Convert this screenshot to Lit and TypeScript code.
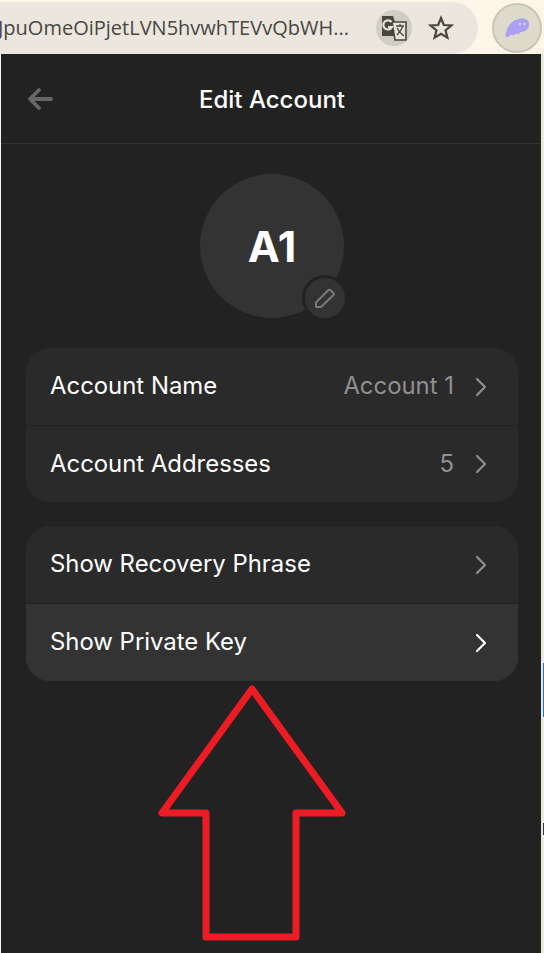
import { LitElement, html, css, svg } from 'lit';
import { customElement } from 'lit/decorators.js';

const chevron = svg`<path d="M2 2 L10 10 L2 18" fill="none" stroke="currentColor" stroke-width="2.2" stroke-linecap="round" stroke-linejoin="round" />`;

interface Row {
  label: string;
  value?: string;
  hover?: boolean;
}

const groups: Row[][] = [
  [
    { label: 'Account Name', value: 'Account 1' },
    { label: 'Account Addresses', value: '5' },
  ],
  [
    { label: 'Show Recovery Phrase' },
    { label: 'Show Private Key', hover: true },
  ],
];

@customElement('app-root')
export class AppRoot extends LitElement {
  static styles = css`
    :host {
      display: block;
      position: relative;
      width: 544px;
      height: 953px;
      overflow: hidden;
      background: #fdf6e8;
      font-family: Inter, 'Liberation Sans', sans-serif;
    }

    .chrome {
      display: flex;
      align-items: center;
      height: 54px;
    }

    .url {
      display: flex;
      align-items: center;
      box-sizing: border-box;
      width: 478px;
      height: 52px;
      margin-top: 1px;
      padding-right: 24px;
      background: #ebe7df;
      border-radius: 0 26px 26px 0;
      overflow: hidden;
    }

    .url__text {
      flex: 1;
      margin-left: -2px;
      font-family: 'Open Sans', sans-serif;
      font-size: 20px;
      color: #4a4640;
      white-space: nowrap;
    }

    .url__translate {
      display: flex;
      align-items: center;
      justify-content: center;
      flex: none;
      width: 36px;
      height: 36px;
      margin-right: 16px;
      border-radius: 50%;
      background: #d0cdc5;
    }

    .url__star {
      display: block;
      flex: none;
      width: 26px;
      height: 26px;
    }

    .ext {
      display: flex;
      align-items: center;
      justify-content: center;
      flex: none;
      box-sizing: border-box;
      width: 50px;
      height: 50px;
      margin-left: 14px;
      margin-top: 1px;
      border-radius: 50%;
      background: #dedbcd;
      border: 2px solid #c8c5b6;
    }

    .panel {
      box-sizing: border-box;
      width: 540px;
      height: 899px;
      margin-left: 1px;
      background: #222222;
      color: #ffffff;
    }

    .header {
      display: flex;
      align-items: center;
      justify-content: center;
      position: relative;
      height: 90px;
      border-bottom: 1px solid #333333;
      box-sizing: border-box;
    }

    .header__back {
      position: absolute;
      left: 26px;
      top: 33px;
      width: 26px;
      height: 24px;
    }

    .header__title {
      font-size: 24px;
      font-weight: 500;
      margin: 1px 0 0 2px;
    }

    .avatar {
      position: relative;
      display: flex;
      align-items: center;
      justify-content: center;
      width: 144px;
      height: 144px;
      margin: 30px 0 30px 199px;
      border-radius: 50%;
      background: #333333;
      font-size: 43px;
      font-weight: 700;
    }

    .avatar__edit {
      position: absolute;
      right: -4px;
      bottom: -3px;
      display: flex;
      align-items: center;
      justify-content: center;
      box-sizing: border-box;
      width: 46px;
      height: 46px;
      border-radius: 50%;
      background: #333333;
      border: 3px solid #222222;
    }

    .groups {
      display: flex;
      flex-direction: column;
      gap: 24px;
      width: 492px;
      margin-left: 25px;
    }

    .group {
      border-radius: 24px;
      overflow: hidden;
      background: #2a2a2a;
    }

    .row {
      display: flex;
      align-items: center;
      box-sizing: border-box;
      height: 77px;
      padding: 0 31px 0 24px;
      font-size: 23.9px;
      color: #ffffff;
    }

    .row + .row {
      border-top: 1px solid #222222;
    }

    .row__label {
      flex: 1;
      margin-bottom: 2px;
    }

    .row__value {
      margin: 0 21px 2px 0;
      color: #8f8f8f;
    }

    .row__chevron {
      display: block;
      width: 12px;
      height: 20px;
      color: #8f8f8f;
    }

    .row--hover {
      height: 78px;
      background: #333333;
    }

    .row--hover .row__chevron {
      color: #ffffff;
    }

    .annotation {
      position: absolute;
      left: 0;
      top: 0;
      width: 544px;
      height: 953px;
      pointer-events: none;
    }

    .desktop-edge {
      position: absolute;
      top: 54px;
      right: 0;
      bottom: 0;
      width: 3px;
      background: #ebe8e0;
    }

    .desktop-edge__blue {
      position: absolute;
      top: 609px;
      right: 0;
      width: 1px;
      height: 54px;
      background: #2f6fc0;
    }

    .desktop-edge__dark {
      position: absolute;
      top: 769px;
      right: 0;
      width: 1px;
      height: 12px;
      background: #3a3a3a;
    }
  `;

  render() {
    return html`
      ${this.chromeBar}
      <div class="panel">
        <div class="header">
          <svg class="header__back" viewBox="0 0 26 24">
            <path
              d="M3 12 H24 M12 3 L3 12 L12 21"
              fill="none"
              stroke="#666666"
              stroke-width="3.8"
              stroke-linejoin="round"
              stroke-linecap="round"
            />
          </svg>
          <div class="header__title">Edit Account</div>
        </div>
        <div class="avatar">
          A1
          <div class="avatar__edit">
            <svg width="22" height="22" viewBox="0 0 22 22">
              <path
                d="M2 15.5 L14.5 3 a1.2 1.2 0 0 1 1.7 0 L19.5 6.3 a1.2 1.2 0 0 1 0 1.7 L7 20 H2 Z"
                fill="none"
                stroke="#7a7a7a"
                stroke-width="2"
                stroke-linejoin="round"
              />
            </svg>
          </div>
        </div>
        <div class="groups">
          ${groups.map(
            group => html`<div class="group">
              ${group.map(row => this.renderRow(row))}
            </div>`
          )}
        </div>
      </div>
      <div class="desktop-edge">
        <div class="desktop-edge__blue"></div>
        <div class="desktop-edge__dark"></div>
      </div>
      <svg class="annotation" viewBox="0 0 544 953">
        <path
          d="M252 689 L162 813 H206 V937 H296 V813 H342 Z"
          fill="none"
          stroke="#ed1c24"
          stroke-width="7"
          stroke-linejoin="round"
        />
      </svg>
    `;
  }

  private get chromeBar() {
    return html`<div class="chrome">
      <div class="url">
        <span class="url__text">JpuOmeOiPjetLVN5hvwhTEVvQbWH...</span>
        <div class="url__translate">
          <svg width="30" height="30" viewBox="0 0 30 30">
            <path d="M3 3 H14 L21 23 H3 Z" fill="#4a4640" />
            <path
              d="M13 9 H27 V27 H16 Z"
              fill="#e6e3db"
              stroke="#4a4640"
              stroke-width="1.6"
            />
            <path
              d="M17 13 H25 M21 11 V13 M24 13 C22 18 20 20 18 22 M18 15 C20 19 22 21 25 23"
              fill="none"
              stroke="#4a4640"
              stroke-width="1.3"
            />
            <path
              d="M12.5 9 A4.6 4.6 0 1 0 13 14 H9"
              fill="none"
              stroke="#e6e3db"
              stroke-width="2.2"
            />
          </svg>
        </div>
        <svg class="url__star" viewBox="0 0 26 26">
          <path
            d="M13 3 L15.8 10 L23.3 10.5 L17.5 15.4 L19.4 22.7 L13 18.7 L6.6 22.7 L8.5 15.4 L2.7 10.5 L10.2 10 Z"
            fill="none"
            stroke="#4a4640"
            stroke-width="2.2"
            stroke-linejoin="miter"
          />
        </svg>
      </div>
      <div class="ext">
        <svg width="25" height="20" viewBox="0 0 25 20">
          <path
            d="M0.5 17 C2 8 8 0.5 17 0.5 C22 0.5 24.5 3.5 24 7.5 C23.5 11.5 20 14 15.5 14 C14.5 16.5 12 16 11 15.5 C9.5 18 7 17.5 6 16.5 C4 19.5 0.5 20 0.5 17 Z"
            fill="#ab9ff2"
          />
          <circle cx="15" cy="6" r="1.2" fill="#dedbcd" />
          <circle cx="19.5" cy="6" r="1.2" fill="#dedbcd" />
        </svg>
      </div>
    </div>`;
  }

  private renderRow(row: Row) {
    return html`<div class="row ${row.hover ? 'row--hover' : ''}">
      <span class="row__label">${row.label}</span>
      ${row.value ? html`<span class="row__value">${row.value}</span>` : ''}
      <svg class="row__chevron" viewBox="0 0 12 20">${chevron}</svg>
    </div>`;
  }
}
